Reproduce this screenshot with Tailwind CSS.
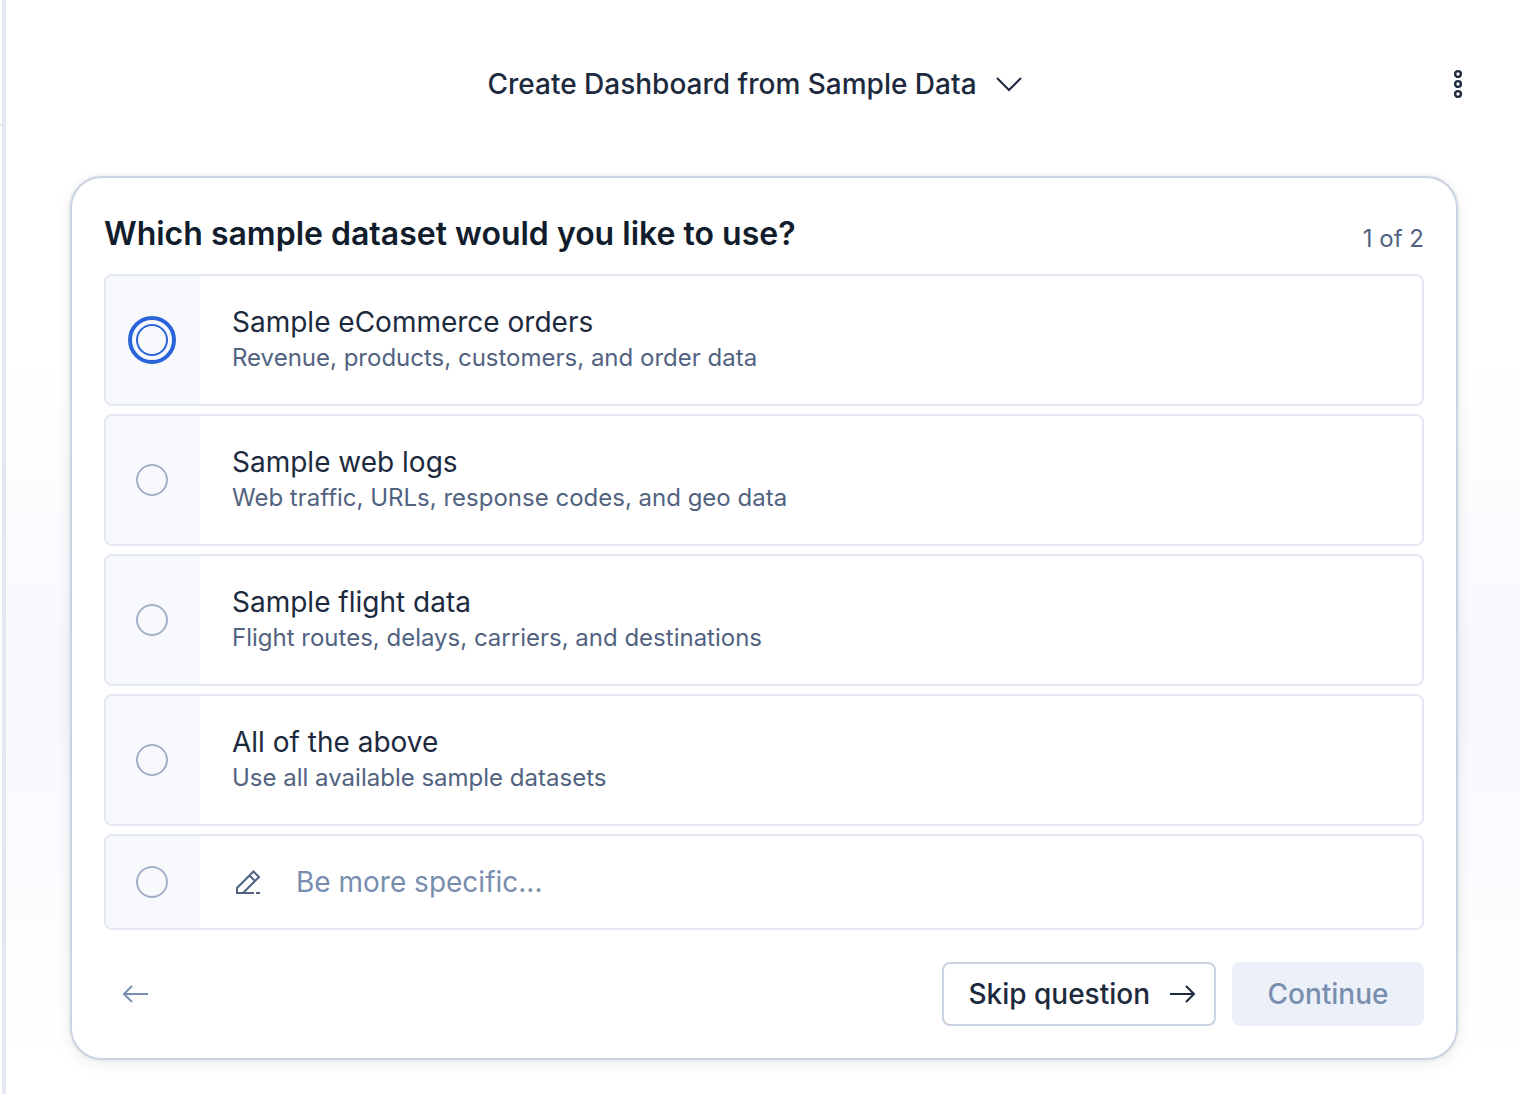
<!DOCTYPE html>
<html lang="en">
<head>
  <meta charset="UTF-8" />
  <meta name="viewport" content="width=device-width, initial-scale=1.0"/>
  <title>Create Dashboard from Sample Data</title>
  <script src="https://cdn.jsdelivr.net/npm/@tailwindcss/browser@4"></script>
</head>
<body class="flex min-h-screen bg-white font-['Inter',sans-serif] text-[#1d2a3e]">

  <!-- Edge of the collapsed side panel -->
  <aside class="w-[6px] shrink-0 border-r-4 border-[#e3e8f2]">
    <div class="h-[126px] border-b-2 border-[#e3e8f2]"></div>
  </aside>

  <div class="flex flex-1 flex-col bg-[linear-gradient(to_bottom,#ffffff_33%,#f6f8fd_62%,#ffffff_97%)]">

    <!-- Header -->
    <header class="grid grid-cols-[1fr_auto_1fr] items-center pt-13 pr-[46px] pl-8">
      <span></span>
      <button type="button" class="flex h-16 items-center gap-4 text-[28px] leading-10 font-medium">
        Create Dashboard from Sample Data
        <svg class="size-8" viewBox="0 0 32 32" fill="none" stroke="currentColor" stroke-width="2"><path d="M4 10l12 12L28 10"/></svg>
      </button>
      <button type="button" aria-label="More options" class="flex h-16 w-8 items-center justify-center justify-self-end">
        <svg class="size-8" viewBox="0 0 32 32" fill="none" stroke="currentColor" stroke-width="2.400"><circle cx="16" cy="6" r="2.900"/><circle cx="16" cy="16" r="2.900"/><circle cx="16" cy="26" r="2.900"/></svg>
      </button>
    </header>

    <!-- Question card -->
    <main class="pt-15 pr-[62px] pb-8 pl-16">
      <form class="rounded-[32px] border-2 border-[#cad3e2] bg-white p-8 shadow-[0_0_4px_rgba(0,0,0,0.08),0_4px_16px_rgba(0,0,0,0.07)]">
        <div class="flex items-end justify-between pb-4">
          <h1 class="text-[32px] leading-12 font-semibold text-[#111c2c]">Which sample dataset would you like to use?</h1>
          <span class="text-2xl leading-[38px] text-[#516381]">1 of 2</span>
        </div>

        <div class="flex flex-col gap-2">
          <label class="flex h-33 overflow-hidden rounded-lg border-2 border-[#e3e8f2] bg-white">
            <span class="flex w-[94px] items-center justify-center bg-[#f7f9fd] pr-0.5">
              <input type="radio" name="dataset" class="size-8 appearance-none rounded-full border-2 border-[#2b65da] outline-4 outline-offset-4 outline-[#2b65da]">
            </span>
            <span class="flex flex-col px-8 pt-[26px]">
              <span class="text-[28px] leading-10">Sample eCommerce orders</span>
              <span class="text-2xl leading-8 text-[#516381]">Revenue, products, customers, and order data</span>
            </span>
          </label>

          <label class="flex h-33 overflow-hidden rounded-lg border-2 border-[#e3e8f2] bg-white">
            <span class="flex w-[94px] items-center justify-center bg-[#f7f9fd] pr-0.5">
              <input type="radio" name="dataset" class="size-8 appearance-none rounded-full border-2 border-[#a2b1c9]">
            </span>
            <span class="flex flex-col px-8 pt-[26px]">
              <span class="text-[28px] leading-10">Sample web logs</span>
              <span class="text-2xl leading-8 text-[#516381]">Web traffic, URLs, response codes, and geo data</span>
            </span>
          </label>

          <label class="flex h-33 overflow-hidden rounded-lg border-2 border-[#e3e8f2] bg-white">
            <span class="flex w-[94px] items-center justify-center bg-[#f7f9fd] pr-0.5">
              <input type="radio" name="dataset" class="size-8 appearance-none rounded-full border-2 border-[#a2b1c9]">
            </span>
            <span class="flex flex-col px-8 pt-[26px]">
              <span class="text-[28px] leading-10">Sample flight data</span>
              <span class="text-2xl leading-8 text-[#516381]">Flight routes, delays, carriers, and destinations</span>
            </span>
          </label>

          <label class="flex h-33 overflow-hidden rounded-lg border-2 border-[#e3e8f2] bg-white">
            <span class="flex w-[94px] items-center justify-center bg-[#f7f9fd] pr-0.5">
              <input type="radio" name="dataset" class="size-8 appearance-none rounded-full border-2 border-[#a2b1c9]">
            </span>
            <span class="flex flex-col px-8 pt-[26px]">
              <span class="text-[28px] leading-10">All of the above</span>
              <span class="text-2xl leading-8 text-[#516381]">Use all available sample datasets</span>
            </span>
          </label>

          <!-- Free text answer -->
          <div class="flex h-24 overflow-hidden rounded-lg border-2 border-[#e3e8f2] bg-white">
            <span class="flex w-[94px] items-center justify-center bg-[#f7f9fd] pr-0.5">
              <input type="radio" name="dataset" aria-label="Other" class="size-8 appearance-none rounded-full border-2 border-[#a2b1c9]">
            </span>
            <div class="flex flex-1 items-center gap-8 px-8">
              <svg class="size-8 shrink-0 text-[#516381]" viewBox="0 0 32 32" fill="none" stroke="currentColor" stroke-width="2"><path d="M22 27H5v-5L21.500 5.500l5.500 5.500L11 27M17.500 9.500l5.500 5.500M24 27h4"/></svg>
              <input type="text" aria-label="Be more specific" placeholder="Be more specific..." class="min-w-0 flex-1 text-[28px] leading-10 outline-none placeholder:text-[#798eaf]">
            </div>
          </div>
        </div>

        <!-- Actions -->
        <div class="flex items-center gap-4 pt-8">
          <button type="button" aria-label="Previous question" class="mr-auto flex size-16 items-center justify-center text-[#798eaf]">
            <svg class="size-8" viewBox="0 0 32 32" fill="none" stroke="currentColor" stroke-width="2"><path d="M28 16H4M12 8l-8 8 8 8"/></svg>
          </button>
          <button type="button" class="flex h-16 items-center gap-4 rounded-lg border-2 border-[#cad3e2] bg-white pr-4 pl-6 text-[28px] leading-10 font-medium">
            Skip question
            <svg class="size-8" viewBox="0 0 32 32" fill="none" stroke="currentColor" stroke-width="2"><path d="M4 16h24M20 8l8 8-8 8"/></svg>
          </button>
          <button type="submit" disabled class="h-16 w-48 rounded-lg bg-[#ecf1f9] text-[28px] leading-10 font-medium text-[#798eaf]">Continue</button>
        </div>
      </form>
    </main>
  </div>

</body>
</html>
